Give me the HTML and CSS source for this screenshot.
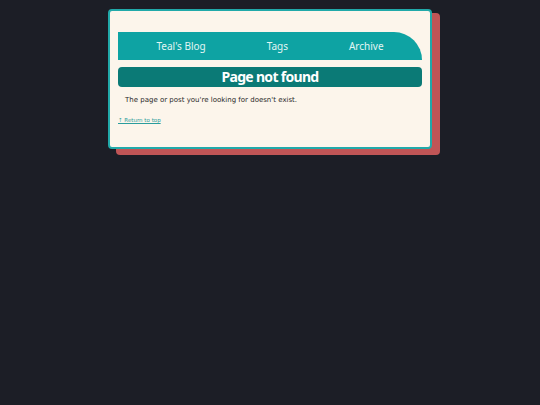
FILE: index.html
```html
<!DOCTYPE html>
<html>
<head>
<meta charset="utf-8">
<link rel="stylesheet" href="styles.css">
</head>
<body>
<main class="card">
  <nav class="nav">
    <a class="nav-link" href="#">Teal's Blog</a>
    <a class="nav-link" href="#">Tags</a>
    <a class="nav-link" href="#">Archive</a>
  </nav>
  <h1 class="title">Page not found</h1>
  <p class="message">The page or post you're looking for doesn't exist.</p>
  <a class="top-link" href="#">↑ Return to top</a>
</main>
</body>
</html>
```
FILE: styles.css
```css
html, body {
  margin: 0;
  padding: 0;
}
body {
  background: #1c1e26;
  min-height: 405px;
  padding-top: 9px;
  box-sizing: border-box;
  font-family: "DejaVu Sans", sans-serif;
}
.card {
  position: relative;
  box-sizing: border-box;
  width: 324px;
  margin: 0 auto;
  background: #fcf5eb;
  border: 2px solid #21a9a9;
  border-radius: 4px;
  padding: 21px 8px 24px 8px;
  display: flex;
  flex-direction: column;
}
.card::before {
  content: "";
  position: absolute;
  left: 6px;
  top: 2px;
  right: -10px;
  bottom: -8px;
  background: #c05556;
  border-radius: 4px;
  z-index: -1;
}
.nav {
  height: 28px;
  background: #0ea3a3;
  border-radius: 0 28px 0 0;
  display: flex;
  align-items: center;
  justify-content: space-around;
  padding: 0 8px;
}
.nav-link {
  color: #e2f6f4;
  text-decoration: none;
  font-family: "Noto Sans", sans-serif;
  font-size: 10px;
}
.title {
  margin: 7px 0 0 0;
  height: 20px;
  background: #0b7a76;
  border-radius: 4px;
  color: #ffffff;
  font-family: "Noto Sans", sans-serif;
  font-weight: 700;
  font-size: 14px;
  letter-spacing: -0.7px;
  line-height: 20px;
  text-align: center;
}
.message {
  margin: 8px 0 0 7px;
  font-size: 7px;
  line-height: 10px;
  color: #2a2a2a;
}
.top-link {
  margin-top: 12px;
  font-size: 5.5px;
  color: #2a9d9d;
  text-decoration: underline;
  align-self: flex-start;
}
```
